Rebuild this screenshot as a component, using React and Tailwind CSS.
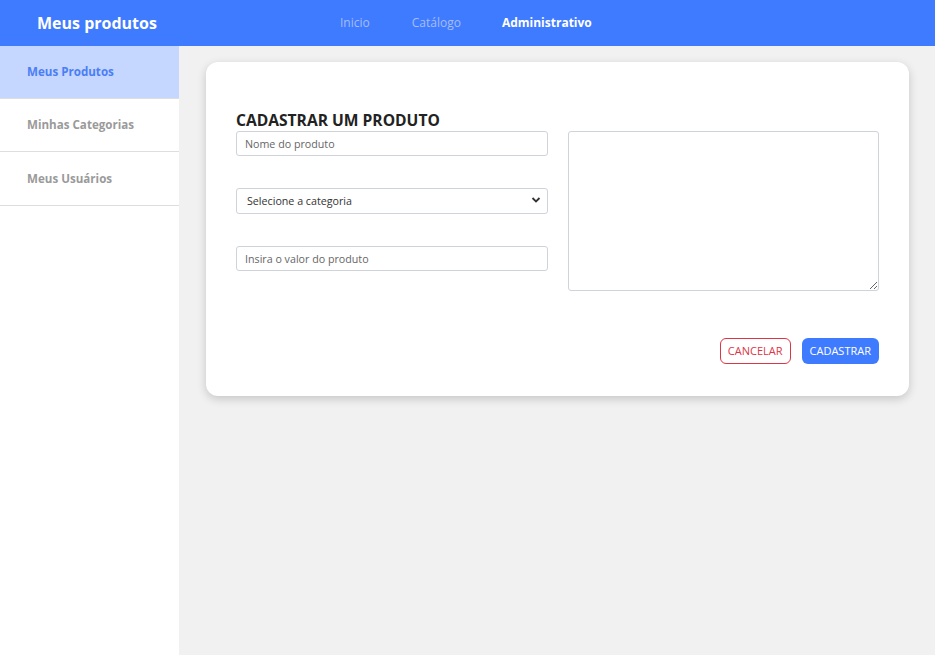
export default function App() {
  return (
    <div className="min-h-screen bg-[#f1f1f1] flex flex-col" style={{ fontFamily: '"Open Sans", sans-serif' }}>
      {/* Header */}
      <header className="h-[46px] bg-[#3f7bff] flex items-center">
        <div className="w-[179px] pl-[37px] text-white font-bold text-[16px]">Meus produtos</div>
        <nav className="flex items-center text-[12px] ml-[161px]">
          <a className="text-[#a6bdf7]">Inicio</a>
          <a className="text-[#a6bdf7] ml-[42px]">Catálogo</a>
          <a className="text-white font-bold ml-[41px]">Administrativo</a>
        </nav>
      </header>

      <div className="flex flex-1 min-h-[609px]">
        {/* Sidebar */}
        <aside className="w-[179px] bg-white">
          <div className="h-[53px] bg-[#c5d6ff] border-b border-[#dedede] flex items-center pl-[27px] text-[11.6px] font-bold text-[#4a7ef5]">
            Meus Produtos
          </div>
          <div className="h-[53px] border-b border-[#dedede] flex items-center pl-[27px] text-[11.6px] font-bold text-[#9a9a9a]">
            Minhas Categorias
          </div>
          <div className="h-[54px] border-b border-[#dedede] flex items-center pl-[27px] text-[11.6px] font-bold text-[#9a9a9a]">
            Meus Usuários
          </div>
        </aside>

        {/* Main */}
        <main className="flex-1 pt-[16px] pl-[27px] pr-[26px]">
          <div className="bg-white rounded-[12px] shadow-[0_3px_10px_rgba(0,0,0,0.18)] pt-[48px] pb-[32px] px-[30px]">
            <h1 className="text-[15.6px] font-bold text-[#222] leading-[20px] mb-[1px]">CADASTRAR UM PRODUTO</h1>
            <div className="flex gap-[20px]">
              <div className="w-[312px] flex flex-col">
                <input
                  placeholder="Nome do produto"
                  className="h-[25px] border border-[#cfd3da] rounded-[3px] px-[8px] text-[10.7px] placeholder:text-[#666] outline-none"
                />
                <div className="relative mt-[31px]">
                  <select className="w-full h-[26px] appearance-none border border-[#cfd3da] rounded-[3px] pl-[10px] text-[10.7px] text-[#333] bg-white outline-none">
                    <option>Selecione a categoria</option>
                  </select>
                  <svg className="absolute right-[7px] top-[9px]" width="10" height="8" viewBox="0 0 10 8">
                    <path d="M1.5 2 L5 5.5 L8.5 2" stroke="#333" strokeWidth="1.8" fill="none" />
                  </svg>
                </div>
                <input
                  placeholder="Insira o valor do produto"
                  className="mt-[32px] h-[25px] border border-[#cfd3da] rounded-[3px] px-[8px] text-[10.7px] placeholder:text-[#666] outline-none"
                />
              </div>
              <textarea className="flex-1 h-[160px] border border-[#cfd3da] rounded-[3px] outline-none resize" />
            </div>
            <div className="flex justify-end gap-[11px] mt-[47px]">
              <button className="h-[26px] px-[7px] rounded-[6px] border border-[#dc3545] text-[#dc3545] text-[11px] bg-white">
                CANCELAR
              </button>
              <button className="h-[26px] px-[8px] rounded-[6px] bg-[#3f7bff] text-white text-[11px]">
                CADASTRAR
              </button>
            </div>
          </div>
        </main>
      </div>
    </div>
  )
}
